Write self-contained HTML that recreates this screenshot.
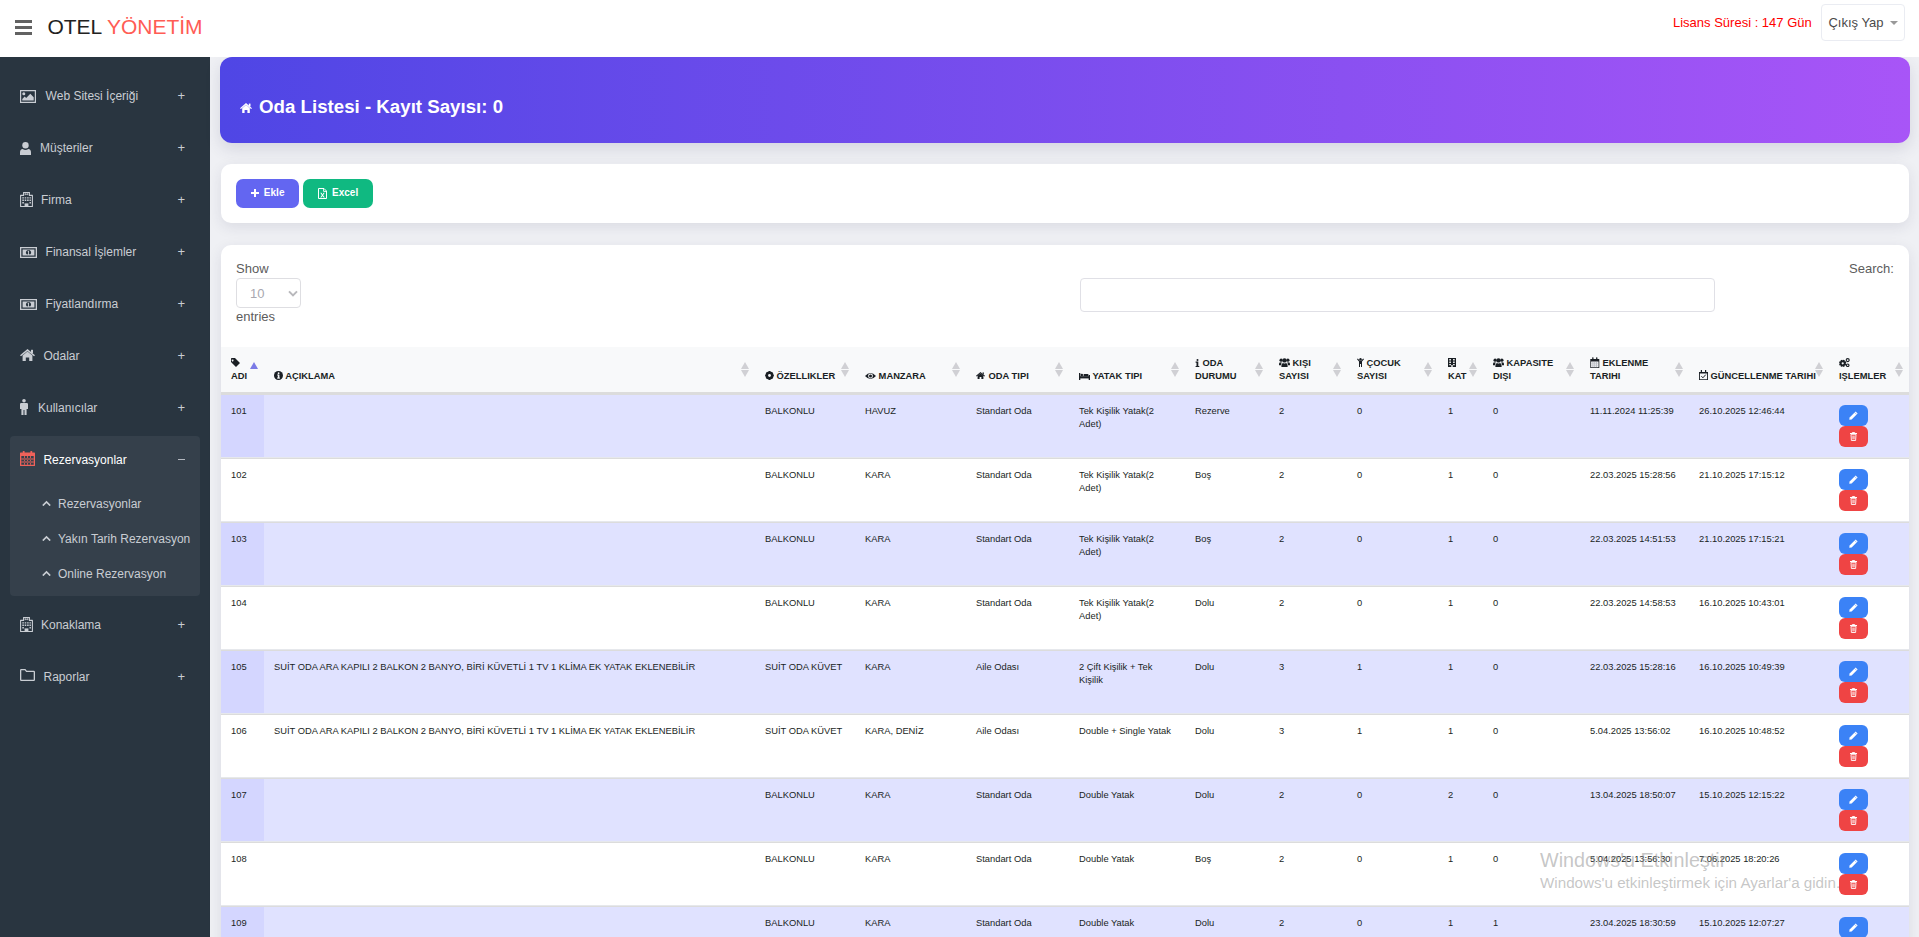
<!DOCTYPE html>
<html lang="tr"><head><meta charset="utf-8"><title>Oda Listesi</title>
<style>
*{box-sizing:border-box}
html,body{margin:0;padding:0}
body{width:1919px;height:937px;overflow:hidden;background:#eff0f4;font-family:"Liberation Sans",sans-serif;position:relative;color:#212529}
.top{position:absolute;left:0;top:0;width:1919px;height:57px;background:#fff;z-index:5}
.hamb{position:absolute;left:15px;top:20px;width:17px;height:14px}
.hamb i{position:absolute;left:0;width:17px;height:2.7px;background:#626262}
.brand{position:absolute;left:47.4px;top:14.6px;font-size:21px;line-height:24px;color:#222;white-space:nowrap}
.brand span{color:#ff5c54}
.lic{position:absolute;left:1673px;top:14px;font-size:13px;line-height:17px;color:#ff0000;white-space:nowrap}
.ddb{position:absolute;left:1821px;top:4px;width:84px;height:37px;border:1px solid #eaecf2;border-radius:4px;background:#fff}
.ddb .t{position:absolute;left:6.4px;top:9.4px;font-size:13px;line-height:17px;color:#4a4a4a;white-space:nowrap}
.ddb .c{position:absolute;left:68.4px;top:15.6px;width:0;height:0;border-left:4px solid transparent;border-right:4px solid transparent;border-top:4.5px solid #999}
.side{position:absolute;left:0;top:57px;width:210px;height:880px;background:#293540}
.mi{position:absolute;left:0;width:210px;height:46px}
.mi .ic{position:absolute;top:0;height:46px;display:flex;align-items:center;color:#c9cdd3}
.mi .ic svg{display:block}
.mi .mt{position:absolute;top:0;line-height:46px;font-size:12px;color:#c9cdd3;white-space:nowrap}
.mi .pl{position:absolute;left:177.6px;top:0;line-height:46px;font-size:13px;color:#c9cdd3}
.mi .mn{position:absolute;left:177.8px;top:22.4px;width:7px;height:1px;background:#b4b8c0}
.act{position:absolute;left:10px;top:379px;width:190px;height:160px;background:#35404b;border-radius:4px}
.si{position:absolute;left:0;width:210px;height:35px}
.si .ch{position:absolute;left:42.1px;top:12.6px;line-height:0}
.si .ch svg{display:block}
.si .st{position:absolute;left:58px;top:0;line-height:35px;font-size:12px;color:#c9cdd3;white-space:nowrap}
.banner{position:absolute;left:220px;top:57px;width:1690px;height:86px;border-radius:12px;background:linear-gradient(90deg,#4f46e5 0%,#a855f7 100%);box-shadow:0 6px 16px rgba(60,60,100,0.14)}
.banner .ti{position:absolute;left:20px;top:0.7px;line-height:98px;font-size:18.7px;font-weight:bold;color:#fff;white-space:nowrap}
.banner .ti svg{vertical-align:1.6px;margin-right:7px}
.card{position:absolute;left:221px;width:1688px;background:#fff;border-radius:10px;box-shadow:0 4px 14px rgba(40,40,80,0.10)}
.c2{top:164px;height:59px}
.c3{top:245px;height:720px;overflow:hidden}
.bt{position:absolute;top:15px;height:29px;border-radius:7px;color:#fff;font-size:10px;font-weight:bold;line-height:27.8px;white-space:nowrap}
.bt svg{vertical-align:0;margin-right:2.3px;position:relative;top:1px}
.b2 svg{top:2.8px}
.b1{left:15px;width:63px;background:#6366f1;padding-left:14.8px}
.b2{left:82px;width:70px;background:#10b981;padding-left:15px}
.lbl{position:absolute;font-size:13px;line-height:15px;color:#5c5c5c;white-space:nowrap}
.sel{position:absolute;left:15px;top:33px;width:65px;height:30px;border:1px solid #dedee2;border-radius:4px}
.sel .v{position:absolute;left:13px;top:6px;font-size:13px;line-height:17px;color:#a8a8b0}
.srch{position:absolute;left:859px;top:33px;width:635px;height:34px;border:1px solid #e0e0e6;border-radius:4px}
table{position:absolute;left:0;top:102px;border-collapse:separate;border-spacing:0;table-layout:fixed;width:1688px;font-size:9.35px}
th{background:#f8f9fa;font-weight:bold;text-align:left;padding:0;line-height:12.9px;position:relative;border-bottom:3px solid #dcdcdc;color:#1a1f24;height:48px}
th .thc{white-space:nowrap;position:absolute;left:10px;bottom:9px}
th .sa{position:absolute;right:5.6px;top:14.8px}
th .thc svg{vertical-align:-1.5px;position:relative;top:1px}
td{vertical-align:top;padding:10px 10px 10px 10px;line-height:13px;height:64px;border-bottom:1px solid #dcdcdc;box-shadow:inset 0 -1px 0 #e6e8ec;color:#1a1f24}
tr.odd td{background:#e0e2ff}
tr.odd td.s1{background:#d4d6ff}
tr.even td{background:#fff}
.btn{width:29px;height:21px;border-radius:6px;display:flex;align-items:center;justify-content:center}
.btn svg{display:block}
.be{background:#3b82f6}
.bd{background:#ef4444}
.wm{position:absolute;left:1540px;top:849px;color:rgba(150,150,150,0.55);white-space:nowrap;pointer-events:none}
.wm .l1{font-size:19.8px;line-height:22px}
.wm .l2{font-size:15.2px;line-height:18px;margin-top:3px}
</style></head><body>
<div class="top">
 <div class="hamb"><i style="top:0"></i><i style="top:6px"></i><i style="top:12px"></i></div>
 <div class="brand">OTEL <span>YÖNETİM</span></div>
 <div class="lic">Lisans Süresi : 147 Gün</div>
 <div class="ddb"><span class="t">Çıkış Yap</span><span class="c"></span></div>
</div>
<div class="side"><div class="mi" style="top:16px"><span class="ic" style="left:20px;top:0px"><svg width="16" height="13" viewBox="0 0 16 13" style="display:inline-block;vertical-align:baseline" fill="currentColor"><path d="M0 0H16V13H0Z M1.2 1.2V11.8H14.8V1.2Z" fill-rule="evenodd"/><circle cx="3.8" cy="3.7" r="1.5"/><path d="M2.3 10.6 V8.9 L4.7 6.5 L6.2 8 L10.3 3.8 L13.7 7.2 V10.6Z"/></svg></span><span class="mt" style="left:45.6px">Web Sitesi İçeriği</span><span class="pl">+</span></div><div class="mi" style="top:68px"><span class="ic" style="left:20px;top:0px"><svg width="11" height="13" viewBox="0 0 11 13" style="display:inline-block;vertical-align:baseline" fill="currentColor"><circle cx="5.5" cy="3.3" r="3.2"/><path d="M0 13 V10.6 Q0 7 2.8 7 Q3.9 7.9 5.5 7.9 Q7.1 7.9 8.2 7 Q11 7 11 10.6 V13Z"/></svg></span><span class="mt" style="left:40px">Müşteriler</span><span class="pl">+</span></div><div class="mi" style="top:120px"><span class="ic" style="left:20px;top:-1px"><svg width="13" height="15" viewBox="0 0 13 15" style="display:inline-block;vertical-align:baseline" fill="currentColor"><path d="M3.6 0.4H9.4V3.4H12.4V14.6H0.6V3.4H3.6Z" stroke="currentColor" stroke-width="1.1" fill="none" stroke-linejoin="round"/><path d="M5.2 1.2V3.2M7.8 1.2V3.2M5.2 2.2H7.8" stroke="currentColor" stroke-width="0.9"/><path d="M2.3 5.2h1.6v1.4H2.3zM4.7 5.2h1.6v1.4H4.7zM7.1 5.2h1.6v1.4H7.1zM9.5 5.2h1.4v1.4H9.5zM2.3 7.6h1.6v1.4H2.3zM4.7 7.6h1.6v1.4H4.7zM7.1 7.6h1.6v1.4H7.1zM9.5 7.6h1.4v1.4H9.5zM2.3 10h1.6v1.4H2.3zM9.5 10h1.4v1.4H9.5z"/><path d="M4.6 14.6V11.4H8.4V14.6Z"/></svg></span><span class="mt" style="left:41px">Firma</span><span class="pl">+</span></div><div class="mi" style="top:172px"><span class="ic" style="left:20px;top:0px"><svg width="17" height="11" viewBox="0 0 17 11" style="display:inline-block;vertical-align:baseline" fill="currentColor"><path d="M0 0H17V11H0Z M1.3 1.3V9.7H15.7V1.3Z" fill-rule="evenodd"/><path d="M2.6 2.6 H14.4 V8.4 H2.6Z M8.5 2.9 A2.6 2.6 0 1 0 8.51 2.9Z" fill-rule="evenodd"/><path d="M7.6 3.8 H9 V7.2 H9.8 V8 H7.3 V7.2 H8.1 V4.6 H7.6Z"/></svg></span><span class="mt" style="left:45.6px">Finansal İşlemler</span><span class="pl">+</span></div><div class="mi" style="top:224px"><span class="ic" style="left:20px;top:0px"><svg width="17" height="11" viewBox="0 0 17 11" style="display:inline-block;vertical-align:baseline" fill="currentColor"><path d="M0 0H17V11H0Z M1.3 1.3V9.7H15.7V1.3Z" fill-rule="evenodd"/><path d="M2.6 2.6 H14.4 V8.4 H2.6Z M8.5 2.9 A2.6 2.6 0 1 0 8.51 2.9Z" fill-rule="evenodd"/><path d="M7.6 3.8 H9 V7.2 H9.8 V8 H7.3 V7.2 H8.1 V4.6 H7.6Z"/></svg></span><span class="mt" style="left:45.6px">Fiyatlandırma</span><span class="pl">+</span></div><div class="mi" style="top:276px"><span class="ic" style="left:20px;top:-1px"><svg width="15" height="12" viewBox="0 0 15 12" style="display:inline-block;vertical-align:baseline" fill="currentColor"><path d="M7.5 0 L15 6.3 L14 7.3 L7.5 1.9 L1 7.3 L0 6.3Z M2.6 6.4 L7.5 2.4 L12.4 6.4 V12 H9.2 V8.4 H5.8 V12 H2.6Z"/><rect x="11" y="0.8" width="2" height="3.2"/></svg></span><span class="mt" style="left:43.5px">Odalar</span><span class="pl">+</span></div><div class="mi" style="top:328px"><span class="ic" style="left:20px;top:-1.5px"><svg width="8" height="16" viewBox="0 0 8 16" style="display:inline-block;vertical-align:baseline" fill="currentColor"><circle cx="4" cy="1.8" r="1.8"/><path d="M1.2 4 H6.8 Q8 4 8 5.2 V10 H6.6 V16 H4.5 V11 H3.5 V16 H1.4 V10 H0 V5.2 Q0 4 1.2 4Z"/></svg></span><span class="mt" style="left:38px">Kullanıcılar</span><span class="pl">+</span></div><div class="act"></div><div class="mi" style="top:380px"><span class="ic" style="left:20px;top:-2px"><svg width="15" height="15" viewBox="0 0 15 15" style="display:inline-block;vertical-align:baseline" fill="#f0625a"><path d="M0 2.2 Q0 1.6 0.6 1.6 H14.4 Q15 1.6 15 2.2 V14.4 Q15 15 14.4 15 H0.6 Q0 15 0 14.4Z M1.3 5 V13.7 H13.7 V5Z" fill-rule="evenodd"/><rect x="2.8" y="0" width="1.8" height="3.6" rx="0.6"/><rect x="10.4" y="0" width="1.8" height="3.6" rx="0.6"/><path d="M1.3 7.6H13.7V8.4H1.3Z M1.3 10.6H13.7V11.4H1.3Z M4.2 5V13.7H5V5Z M7.1 5V13.7H7.9V5Z M10 5V13.7H10.8V5Z"/></svg></span><span class="mt" style="left:43.4px;color:#fff">Rezervasyonlar</span><span class="mn"></span></div><div class="si" style="top:430px"><span class="ch"><svg width="9" height="6" viewBox="0 0 9 6" style="display:inline-block;vertical-align:baseline" fill="currentColor"><path d="M0.8 5.6 L4.5 1.9 L8.2 5.6" stroke="#c9cdd3" stroke-width="1.6" fill="none"/></svg></span><span class="st">Rezervasyonlar</span></div><div class="si" style="top:465px"><span class="ch"><svg width="9" height="6" viewBox="0 0 9 6" style="display:inline-block;vertical-align:baseline" fill="currentColor"><path d="M0.8 5.6 L4.5 1.9 L8.2 5.6" stroke="#c9cdd3" stroke-width="1.6" fill="none"/></svg></span><span class="st">Yakın Tarih Rezervasyon</span></div><div class="si" style="top:500px"><span class="ch"><svg width="9" height="6" viewBox="0 0 9 6" style="display:inline-block;vertical-align:baseline" fill="currentColor"><path d="M0.8 5.6 L4.5 1.9 L8.2 5.6" stroke="#c9cdd3" stroke-width="1.6" fill="none"/></svg></span><span class="st">Online Rezervasyon</span></div><div class="mi" style="top:544.6px"><span class="ic" style="left:20px;top:-0.5px"><svg width="13" height="15" viewBox="0 0 13 15" style="display:inline-block;vertical-align:baseline" fill="currentColor"><path d="M3.6 0.4H9.4V3.4H12.4V14.6H0.6V3.4H3.6Z" stroke="currentColor" stroke-width="1.1" fill="none" stroke-linejoin="round"/><path d="M5.2 1.2V3.2M7.8 1.2V3.2M5.2 2.2H7.8" stroke="currentColor" stroke-width="0.9"/><path d="M2.3 5.2h1.6v1.4H2.3zM4.7 5.2h1.6v1.4H4.7zM7.1 5.2h1.6v1.4H7.1zM9.5 5.2h1.4v1.4H9.5zM2.3 7.6h1.6v1.4H2.3zM4.7 7.6h1.6v1.4H4.7zM7.1 7.6h1.6v1.4H7.1zM9.5 7.6h1.4v1.4H9.5zM2.3 10h1.6v1.4H2.3zM9.5 10h1.4v1.4H9.5z"/><path d="M4.6 14.6V11.4H8.4V14.6Z"/></svg></span><span class="mt" style="left:41px">Konaklama</span><span class="pl">+</span></div><div class="mi" style="top:596.6px"><span class="ic" style="left:20px;top:-1.5px"><svg width="15" height="12" viewBox="0 0 15 12" style="display:inline-block;vertical-align:baseline" fill="currentColor"><path d="M0 1.2 Q0 0 1.2 0 H5.4 L6.8 1.8 H13.8 Q15 1.8 15 3 V10.8 Q15 12 13.8 12 H1.2 Q0 12 0 10.8Z M1.3 1.3 V10.7 H13.7 V3.1 H6.2 L4.8 1.3Z" fill-rule="evenodd"/></svg></span><span class="mt" style="left:43.5px">Raporlar</span><span class="pl">+</span></div></div>
<div class="banner"><div class="ti"><svg width="12" height="10" viewBox="0 0 12 10" style="display:inline-block;vertical-align:baseline" fill="#fff"><path d="M6 0 L12 5.2 L11.1 6.1 L6 1.7 L0.9 6.1 L0 5.2Z M2.2 5.2 L6 2 L9.8 5.2 V10 H7.4 V7 H4.6 V10 H2.2Z"/><rect x="8.8" y="0.6" width="1.7" height="2.8"/></svg>Oda Listesi - Kayıt Sayısı: 0</div></div>
<div class="card c2"><div class="bt b1"><svg width="8" height="8" viewBox="0 0 8 8" style="display:inline-block;vertical-align:baseline" fill="#fff"><path d="M3 0H5V3H8V5H5V8H3V5H0V3H3Z"/></svg> Ekle</div><div class="bt b2"><svg width="9" height="11" viewBox="0 0 9 11" style="display:inline-block;vertical-align:baseline" fill="#fff"><path d="M0.5 0.5H6L8.5 3V10.5H0.5Z" stroke="#fff" stroke-width="1" fill="none"/><path d="M5.6 0.6V3.4H8.4" stroke="#fff" stroke-width="0.9" fill="none"/><path d="M2.3 4.8 H3.5 L4.5 6.5 L5.5 4.8 H6.7 L5.1 7.3 L6.8 9.6 H5.6 L4.5 8 L3.4 9.6 H2.2 L3.9 7.3Z"/></svg> Excel</div></div>
<div class="card c3">
 <div class="lbl" style="left:15px;top:16px">Show</div>
 <div class="sel"><span class="v">10</span><svg style="position:absolute;left:50.5px;top:10.5px" width="10" height="7" viewBox="0 0 10 7"><path d="M1 1.4 L5 5.4 L9 1.4" stroke="#b8b8bc" stroke-width="2" fill="none"/></svg></div>
 <div class="lbl" style="left:15px;top:64px">entries</div>
 <div class="lbl" style="left:1628px;top:16px">Search:</div>
 <div class="srch"></div>
 <table><thead><tr><th style="width:43px"><div class="thc"><svg width="9" height="9" viewBox="0 0 9 9" style="display:inline-block;vertical-align:baseline" fill="currentColor"><path d="M0 0.8 Q0 0 0.8 0 H4 L9 5 L5 9 L0 4 Z M1.6 1.6 a0.9 0.9 0 1 0 0.01 0Z" fill-rule="evenodd"/></svg><br>ADI</div><svg class="sa" width="8" height="15" viewBox="0 0 8 15"><path d="M4 0 L8 7 H0Z" fill="#7b7be6"/></svg></th><th style="width:491px"><div class="thc"><svg width="9" height="9" viewBox="0 0 9 9" style="display:inline-block;vertical-align:baseline" fill="currentColor"><circle cx="4.5" cy="4.5" r="4.5"/><rect x="3.8" y="3.6" width="1.6" height="3.8" fill="#f8f9fa"/><rect x="3" y="6.6" width="3" height="0.9" fill="#f8f9fa"/><rect x="3.1" y="3.6" width="1.5" height="0.8" fill="#f8f9fa"/><circle cx="4.6" cy="2.2" r="0.9" fill="#f8f9fa"/></svg> AÇIKLAMA</div><svg class="sa" width="8" height="15" viewBox="0 0 8 15"><path d="M4 0 L8 7 H0Z" fill="#d0d0d4"/><path d="M0 8 H8 L4 15Z" fill="#d0d0d4"/></svg></th><th style="width:100px"><div class="thc"><svg width="9" height="9" viewBox="0 0 9 9" style="display:inline-block;vertical-align:baseline" fill="currentColor"><path d="M7.64 3.20 L8.88 3.45 L8.88 5.55 L7.64 5.80 L8.34 6.85 L6.85 8.34 L5.80 7.64 L5.55 8.88 L3.45 8.88 L3.20 7.64 L2.15 8.34 L0.66 6.85 L1.36 5.80 L0.12 5.55 L0.12 3.45 L1.36 3.20 L0.66 2.15 L2.15 0.66 L3.20 1.36 L3.45 0.12 L5.55 0.12 L5.80 1.36 L6.85 0.66 L8.34 2.15Z"/><circle cx="4.5" cy="4.5" r="3.5"/><circle cx="4.5" cy="4.5" r="1.4" fill="#f8f9fa"/></svg> ÖZELLIKLER</div><svg class="sa" width="8" height="15" viewBox="0 0 8 15"><path d="M4 0 L8 7 H0Z" fill="#d0d0d4"/><path d="M0 8 H8 L4 15Z" fill="#d0d0d4"/></svg></th><th style="width:111px"><div class="thc"><svg width="11" height="8" viewBox="0 0 11 8" style="display:inline-block;vertical-align:baseline" fill="currentColor"><path d="M0 4 Q5.5 -2 11 4 Q5.5 10 0 4Z"/><circle cx="5.5" cy="4" r="2.4" fill="#f8f9fa"/><circle cx="5.5" cy="4" r="1.5"/></svg> MANZARA</div><svg class="sa" width="8" height="15" viewBox="0 0 8 15"><path d="M4 0 L8 7 H0Z" fill="#d0d0d4"/><path d="M0 8 H8 L4 15Z" fill="#d0d0d4"/></svg></th><th style="width:103px"><div class="thc"><svg width="9" height="7" viewBox="0 0 9 7" style="display:inline-block;vertical-align:baseline;top:0px;margin-right:1px" fill="currentColor"><path d="M4.5 0 L9 3.8 L8.4 4.4 L4.5 1.2 L0.6 4.4 L0 3.8Z M1.6 3.8 L4.5 1.5 L7.4 3.8 V7 H5.4 V5 H3.6 V7 H1.6Z"/><rect x="6.6" y="0.4" width="1.2" height="2"/></svg> ODA TIPI</div><svg class="sa" width="8" height="15" viewBox="0 0 8 15"><path d="M4 0 L8 7 H0Z" fill="#d0d0d4"/><path d="M0 8 H8 L4 15Z" fill="#d0d0d4"/></svg></th><th style="width:116px"><div class="thc"><svg width="11" height="7" viewBox="0 0 11 7" style="display:inline-block;vertical-align:baseline" fill="currentColor"><rect x="0" y="0" width="1.3" height="7"/><rect x="1" y="3.2" width="10" height="2.2"/><rect x="9.7" y="2" width="1.3" height="5"/><circle cx="2.8" cy="2" r="1.3"/><rect x="4.5" y="1" width="5" height="2.2" rx="0.8"/></svg> YATAK TIPI</div><svg class="sa" width="8" height="15" viewBox="0 0 8 15"><path d="M4 0 L8 7 H0Z" fill="#d0d0d4"/><path d="M0 8 H8 L4 15Z" fill="#d0d0d4"/></svg></th><th style="width:84px"><div class="thc"><svg width="5" height="8" viewBox="0 0 5 8" style="display:inline-block;vertical-align:baseline" fill="currentColor"><circle cx="2.5" cy="1" r="1"/><path d="M0.6 2.6H3.3V6.9H4.3V8H0.6V6.9H1.5V3.7H0.6Z"/></svg> ODA<br>DURUMU</div><svg class="sa" width="8" height="15" viewBox="0 0 8 15"><path d="M4 0 L8 7 H0Z" fill="#d0d0d4"/><path d="M0 8 H8 L4 15Z" fill="#d0d0d4"/></svg></th><th style="width:78px"><div class="thc"><svg width="11" height="9" viewBox="0 0 11 9" style="display:inline-block;vertical-align:baseline" fill="currentColor"><circle cx="5.5" cy="2.4" r="2.2"/><circle cx="2.1" cy="2.2" r="1.6"/><circle cx="8.9" cy="2.2" r="1.6"/><path d="M2.4 9 V7.4 Q2.4 4.9 4.2 4.9 Q4.8 5.4 5.5 5.4 Q6.2 5.4 6.8 4.9 Q8.6 4.9 8.6 7.4 V9Z"/><path d="M0 7.2 V6 Q0 4.2 1.3 4.2 Q1.7 4.5 2.2 4.5 Q2.7 4.5 3.1 4.3 Q2 5.2 2 7.2Z"/><path d="M11 7.2 V6 Q11 4.2 9.7 4.2 Q9.3 4.5 8.8 4.5 Q8.3 4.5 7.9 4.3 Q9 5.2 9 7.2Z"/></svg> KIŞI<br>SAYISI</div><svg class="sa" width="8" height="15" viewBox="0 0 8 15"><path d="M4 0 L8 7 H0Z" fill="#d0d0d4"/><path d="M0 8 H8 L4 15Z" fill="#d0d0d4"/></svg></th><th style="width:91px"><div class="thc"><svg width="7" height="9" viewBox="0 0 7 9" style="display:inline-block;vertical-align:baseline" fill="currentColor"><circle cx="3.5" cy="1.2" r="1.2"/><path d="M0 1.2 L0.8 0.6 L2.6 2.6 H4.4 L6.2 0.6 L7 1.2 L5 3.6 V9 H4 V6 H3 V9 H2 V3.6Z"/></svg> ÇOCUK<br>SAYISI</div><svg class="sa" width="8" height="15" viewBox="0 0 8 15"><path d="M4 0 L8 7 H0Z" fill="#d0d0d4"/><path d="M0 8 H8 L4 15Z" fill="#d0d0d4"/></svg></th><th style="width:45px"><div class="thc"><svg width="8" height="9" viewBox="0 0 8 9" style="display:inline-block;vertical-align:baseline" fill="currentColor"><path d="M0 0H8V9H0Z M1.3 1.1V2.5H2.9V1.1Z M5.1 1.1V2.5H6.7V1.1Z M1.3 3.5V4.9H2.9V3.5Z M5.1 3.5V4.9H6.7V3.5Z M1.3 5.9V7.3H2.9V5.9Z M5.1 5.9V7.3H6.7V5.9Z M3.3 7V9H4.7V7Z" fill-rule="evenodd"/></svg><br>KAT</div><svg class="sa" width="8" height="15" viewBox="0 0 8 15"><path d="M4 0 L8 7 H0Z" fill="#d0d0d4"/><path d="M0 8 H8 L4 15Z" fill="#d0d0d4"/></svg></th><th style="width:97px"><div class="thc"><svg width="11" height="9" viewBox="0 0 11 9" style="display:inline-block;vertical-align:baseline" fill="currentColor"><circle cx="5.5" cy="2.4" r="2.2"/><circle cx="2.1" cy="2.2" r="1.6"/><circle cx="8.9" cy="2.2" r="1.6"/><path d="M2.4 9 V7.4 Q2.4 4.9 4.2 4.9 Q4.8 5.4 5.5 5.4 Q6.2 5.4 6.8 4.9 Q8.6 4.9 8.6 7.4 V9Z"/><path d="M0 7.2 V6 Q0 4.2 1.3 4.2 Q1.7 4.5 2.2 4.5 Q2.7 4.5 3.1 4.3 Q2 5.2 2 7.2Z"/><path d="M11 7.2 V6 Q11 4.2 9.7 4.2 Q9.3 4.5 8.8 4.5 Q8.3 4.5 7.9 4.3 Q9 5.2 9 7.2Z"/></svg> KAPASITE<br>DIŞI</div><svg class="sa" width="8" height="15" viewBox="0 0 8 15"><path d="M4 0 L8 7 H0Z" fill="#d0d0d4"/><path d="M0 8 H8 L4 15Z" fill="#d0d0d4"/></svg></th><th style="width:109px"><div class="thc"><svg width="10" height="11" viewBox="0 0 10 11" style="display:inline-block;vertical-align:baseline;top:1.6px" fill="currentColor"><path d="M0.3 2H9.3V11H0.3Z M1.1 4.4V10.2H8.5V4.4Z" fill-rule="evenodd"/><rect x="2.2" y="0.2" width="1.3" height="2.8" rx="0.5"/><rect x="6.1" y="0.2" width="1.3" height="2.8" rx="0.5"/><path d="M2.95 4.4V10.2M4.8 4.4V10.2M6.65 4.4V10.2" stroke="#8a8f98" stroke-width="0.6"/><path d="M1.1 6.4H8.5M1.1 8.3H8.5" stroke="#b8bcc4" stroke-width="0.4"/></svg> EKLENME<br>TARIHI</div><svg class="sa" width="8" height="15" viewBox="0 0 8 15"><path d="M4 0 L8 7 H0Z" fill="#d0d0d4"/><path d="M0 8 H8 L4 15Z" fill="#d0d0d4"/></svg></th><th style="width:140px"><div class="thc"><svg width="9" height="10" viewBox="0 0 9 10" style="display:inline-block;vertical-align:baseline" fill="currentColor"><path d="M0 2H9V10H0Z M0.9 3.6V9.2H8.1V3.6Z" fill-rule="evenodd"/><rect x="1.8" y="0" width="1.2" height="2.6"/><rect x="6" y="0" width="1.2" height="2.6"/><path d="M2.4 6.2 L3.9 7.8 L6.8 4.6" stroke="currentColor" stroke-width="1" fill="none"/></svg> GÜNCELLENME TARIHI</div><svg class="sa" width="8" height="15" viewBox="0 0 8 15"><path d="M4 0 L8 7 H0Z" fill="#d0d0d4"/><path d="M0 8 H8 L4 15Z" fill="#d0d0d4"/></svg></th><th style="width:80px"><div class="thc"><svg width="11" height="9" viewBox="0 0 11 9" style="display:inline-block;vertical-align:baseline" fill="currentColor"><path d="M6.50 5.30 L7.34 5.95 L6.74 7.42 L5.68 7.28 L5.82 8.34 L4.35 8.94 L3.70 8.10 L3.05 8.94 L1.58 8.34 L1.72 7.28 L0.66 7.42 L0.06 5.95 L0.90 5.30 L0.06 4.65 L0.66 3.18 L1.72 3.32 L1.58 2.26 L3.05 1.66 L3.70 2.50 L4.35 1.66 L5.82 2.26 L5.68 3.32 L6.74 3.18 L7.34 4.65Z"/><circle cx="3.7" cy="5.3" r="1.1" fill="#f8f9fa"/><circle cx="8.7" cy="2.1" r="1.5" fill="none" stroke="currentColor" stroke-width="1.1"/><circle cx="8.7" cy="7.3" r="1.3" fill="none" stroke="currentColor" stroke-width="1.1"/></svg><br>IŞLEMLER</div><svg class="sa" width="8" height="15" viewBox="0 0 8 15"><path d="M4 0 L8 7 H0Z" fill="#d0d0d4"/><path d="M0 8 H8 L4 15Z" fill="#d0d0d4"/></svg></th></tr></thead><tbody><tr class="odd"><td class="s1">101</td><td></td><td>BALKONLU</td><td>HAVUZ</td><td>Standart Oda</td><td>Tek Kişilik Yatak(2 Adet)</td><td>Rezerve</td><td>2</td><td>0</td><td>1</td><td>0</td><td>11.11.2024 11:25:39</td><td>26.10.2025 12:46:44</td><td><div class="btn be"><svg width="9" height="9" viewBox="0 0 9 9" style="display:inline-block;vertical-align:baseline" fill="#fff"><path d="M6.6 0.4 L8.6 2.4 L2.6 8.4 L0.3 8.7 L0.6 6.4Z"/><path d="M5.6 1.4 L7.6 3.4" stroke="#3b82f6" stroke-width="0.5"/></svg></div><div class="btn bd"><svg width="7" height="9" viewBox="0 0 7 9" style="display:inline-block;vertical-align:baseline" fill="none"><path d="M0 1.5H7" stroke="#fff" stroke-width="1"/><path d="M2.3 1.2V0.5H4.7V1.2" stroke="#fff" stroke-width="0.9" fill="none"/><path d="M1 2.3H6L5.6 8.5H1.4Z" stroke="#fff" stroke-width="0.9" fill="none"/><path d="M2.6 3.6V7.4M3.5 3.6V7.4M4.4 3.6V7.4" stroke="#fff" stroke-width="0.55"/></svg></div></td></tr><tr class="even"><td class="s1">102</td><td></td><td>BALKONLU</td><td>KARA</td><td>Standart Oda</td><td>Tek Kişilik Yatak(2 Adet)</td><td>Boş</td><td>2</td><td>0</td><td>1</td><td>0</td><td>22.03.2025 15:28:56</td><td>21.10.2025 17:15:12</td><td><div class="btn be"><svg width="9" height="9" viewBox="0 0 9 9" style="display:inline-block;vertical-align:baseline" fill="#fff"><path d="M6.6 0.4 L8.6 2.4 L2.6 8.4 L0.3 8.7 L0.6 6.4Z"/><path d="M5.6 1.4 L7.6 3.4" stroke="#3b82f6" stroke-width="0.5"/></svg></div><div class="btn bd"><svg width="7" height="9" viewBox="0 0 7 9" style="display:inline-block;vertical-align:baseline" fill="none"><path d="M0 1.5H7" stroke="#fff" stroke-width="1"/><path d="M2.3 1.2V0.5H4.7V1.2" stroke="#fff" stroke-width="0.9" fill="none"/><path d="M1 2.3H6L5.6 8.5H1.4Z" stroke="#fff" stroke-width="0.9" fill="none"/><path d="M2.6 3.6V7.4M3.5 3.6V7.4M4.4 3.6V7.4" stroke="#fff" stroke-width="0.55"/></svg></div></td></tr><tr class="odd"><td class="s1">103</td><td></td><td>BALKONLU</td><td>KARA</td><td>Standart Oda</td><td>Tek Kişilik Yatak(2 Adet)</td><td>Boş</td><td>2</td><td>0</td><td>1</td><td>0</td><td>22.03.2025 14:51:53</td><td>21.10.2025 17:15:21</td><td><div class="btn be"><svg width="9" height="9" viewBox="0 0 9 9" style="display:inline-block;vertical-align:baseline" fill="#fff"><path d="M6.6 0.4 L8.6 2.4 L2.6 8.4 L0.3 8.7 L0.6 6.4Z"/><path d="M5.6 1.4 L7.6 3.4" stroke="#3b82f6" stroke-width="0.5"/></svg></div><div class="btn bd"><svg width="7" height="9" viewBox="0 0 7 9" style="display:inline-block;vertical-align:baseline" fill="none"><path d="M0 1.5H7" stroke="#fff" stroke-width="1"/><path d="M2.3 1.2V0.5H4.7V1.2" stroke="#fff" stroke-width="0.9" fill="none"/><path d="M1 2.3H6L5.6 8.5H1.4Z" stroke="#fff" stroke-width="0.9" fill="none"/><path d="M2.6 3.6V7.4M3.5 3.6V7.4M4.4 3.6V7.4" stroke="#fff" stroke-width="0.55"/></svg></div></td></tr><tr class="even"><td class="s1">104</td><td></td><td>BALKONLU</td><td>KARA</td><td>Standart Oda</td><td>Tek Kişilik Yatak(2 Adet)</td><td>Dolu</td><td>2</td><td>0</td><td>1</td><td>0</td><td>22.03.2025 14:58:53</td><td>16.10.2025 10:43:01</td><td><div class="btn be"><svg width="9" height="9" viewBox="0 0 9 9" style="display:inline-block;vertical-align:baseline" fill="#fff"><path d="M6.6 0.4 L8.6 2.4 L2.6 8.4 L0.3 8.7 L0.6 6.4Z"/><path d="M5.6 1.4 L7.6 3.4" stroke="#3b82f6" stroke-width="0.5"/></svg></div><div class="btn bd"><svg width="7" height="9" viewBox="0 0 7 9" style="display:inline-block;vertical-align:baseline" fill="none"><path d="M0 1.5H7" stroke="#fff" stroke-width="1"/><path d="M2.3 1.2V0.5H4.7V1.2" stroke="#fff" stroke-width="0.9" fill="none"/><path d="M1 2.3H6L5.6 8.5H1.4Z" stroke="#fff" stroke-width="0.9" fill="none"/><path d="M2.6 3.6V7.4M3.5 3.6V7.4M4.4 3.6V7.4" stroke="#fff" stroke-width="0.55"/></svg></div></td></tr><tr class="odd"><td class="s1">105</td><td>SUİT ODA ARA KAPILI 2 BALKON 2 BANYO, BİRİ KÜVETLİ 1 TV 1 KLİMA EK YATAK EKLENEBİLİR</td><td>SUİT ODA KÜVET</td><td>KARA</td><td>Aile Odası</td><td>2 Çift Kişilik + Tek Kişilik</td><td>Dolu</td><td>3</td><td>1</td><td>1</td><td>0</td><td>22.03.2025 15:28:16</td><td>16.10.2025 10:49:39</td><td><div class="btn be"><svg width="9" height="9" viewBox="0 0 9 9" style="display:inline-block;vertical-align:baseline" fill="#fff"><path d="M6.6 0.4 L8.6 2.4 L2.6 8.4 L0.3 8.7 L0.6 6.4Z"/><path d="M5.6 1.4 L7.6 3.4" stroke="#3b82f6" stroke-width="0.5"/></svg></div><div class="btn bd"><svg width="7" height="9" viewBox="0 0 7 9" style="display:inline-block;vertical-align:baseline" fill="none"><path d="M0 1.5H7" stroke="#fff" stroke-width="1"/><path d="M2.3 1.2V0.5H4.7V1.2" stroke="#fff" stroke-width="0.9" fill="none"/><path d="M1 2.3H6L5.6 8.5H1.4Z" stroke="#fff" stroke-width="0.9" fill="none"/><path d="M2.6 3.6V7.4M3.5 3.6V7.4M4.4 3.6V7.4" stroke="#fff" stroke-width="0.55"/></svg></div></td></tr><tr class="even"><td class="s1">106</td><td>SUİT ODA ARA KAPILI 2 BALKON 2 BANYO, BİRİ KÜVETLİ 1 TV 1 KLİMA EK YATAK EKLENEBİLİR</td><td>SUİT ODA KÜVET</td><td>KARA, DENİZ</td><td>Aile Odası</td><td>Double + Single Yatak</td><td>Dolu</td><td>3</td><td>1</td><td>1</td><td>0</td><td>5.04.2025 13:56:02</td><td>16.10.2025 10:48:52</td><td><div class="btn be"><svg width="9" height="9" viewBox="0 0 9 9" style="display:inline-block;vertical-align:baseline" fill="#fff"><path d="M6.6 0.4 L8.6 2.4 L2.6 8.4 L0.3 8.7 L0.6 6.4Z"/><path d="M5.6 1.4 L7.6 3.4" stroke="#3b82f6" stroke-width="0.5"/></svg></div><div class="btn bd"><svg width="7" height="9" viewBox="0 0 7 9" style="display:inline-block;vertical-align:baseline" fill="none"><path d="M0 1.5H7" stroke="#fff" stroke-width="1"/><path d="M2.3 1.2V0.5H4.7V1.2" stroke="#fff" stroke-width="0.9" fill="none"/><path d="M1 2.3H6L5.6 8.5H1.4Z" stroke="#fff" stroke-width="0.9" fill="none"/><path d="M2.6 3.6V7.4M3.5 3.6V7.4M4.4 3.6V7.4" stroke="#fff" stroke-width="0.55"/></svg></div></td></tr><tr class="odd"><td class="s1">107</td><td></td><td>BALKONLU</td><td>KARA</td><td>Standart Oda</td><td>Double Yatak</td><td>Dolu</td><td>2</td><td>0</td><td>2</td><td>0</td><td>13.04.2025 18:50:07</td><td>15.10.2025 12:15:22</td><td><div class="btn be"><svg width="9" height="9" viewBox="0 0 9 9" style="display:inline-block;vertical-align:baseline" fill="#fff"><path d="M6.6 0.4 L8.6 2.4 L2.6 8.4 L0.3 8.7 L0.6 6.4Z"/><path d="M5.6 1.4 L7.6 3.4" stroke="#3b82f6" stroke-width="0.5"/></svg></div><div class="btn bd"><svg width="7" height="9" viewBox="0 0 7 9" style="display:inline-block;vertical-align:baseline" fill="none"><path d="M0 1.5H7" stroke="#fff" stroke-width="1"/><path d="M2.3 1.2V0.5H4.7V1.2" stroke="#fff" stroke-width="0.9" fill="none"/><path d="M1 2.3H6L5.6 8.5H1.4Z" stroke="#fff" stroke-width="0.9" fill="none"/><path d="M2.6 3.6V7.4M3.5 3.6V7.4M4.4 3.6V7.4" stroke="#fff" stroke-width="0.55"/></svg></div></td></tr><tr class="even"><td class="s1">108</td><td></td><td>BALKONLU</td><td>KARA</td><td>Standart Oda</td><td>Double Yatak</td><td>Boş</td><td>2</td><td>0</td><td>1</td><td>0</td><td>5.04.2025 13:56:30</td><td>7.06.2025 18:20:26</td><td><div class="btn be"><svg width="9" height="9" viewBox="0 0 9 9" style="display:inline-block;vertical-align:baseline" fill="#fff"><path d="M6.6 0.4 L8.6 2.4 L2.6 8.4 L0.3 8.7 L0.6 6.4Z"/><path d="M5.6 1.4 L7.6 3.4" stroke="#3b82f6" stroke-width="0.5"/></svg></div><div class="btn bd"><svg width="7" height="9" viewBox="0 0 7 9" style="display:inline-block;vertical-align:baseline" fill="none"><path d="M0 1.5H7" stroke="#fff" stroke-width="1"/><path d="M2.3 1.2V0.5H4.7V1.2" stroke="#fff" stroke-width="0.9" fill="none"/><path d="M1 2.3H6L5.6 8.5H1.4Z" stroke="#fff" stroke-width="0.9" fill="none"/><path d="M2.6 3.6V7.4M3.5 3.6V7.4M4.4 3.6V7.4" stroke="#fff" stroke-width="0.55"/></svg></div></td></tr><tr class="odd"><td class="s1">109</td><td></td><td>BALKONLU</td><td>KARA</td><td>Standart Oda</td><td>Double Yatak</td><td>Dolu</td><td>2</td><td>0</td><td>1</td><td>1</td><td>23.04.2025 18:30:59</td><td>15.10.2025 12:07:27</td><td><div class="btn be"><svg width="9" height="9" viewBox="0 0 9 9" style="display:inline-block;vertical-align:baseline" fill="#fff"><path d="M6.6 0.4 L8.6 2.4 L2.6 8.4 L0.3 8.7 L0.6 6.4Z"/><path d="M5.6 1.4 L7.6 3.4" stroke="#3b82f6" stroke-width="0.5"/></svg></div><div class="btn bd"><svg width="7" height="9" viewBox="0 0 7 9" style="display:inline-block;vertical-align:baseline" fill="none"><path d="M0 1.5H7" stroke="#fff" stroke-width="1"/><path d="M2.3 1.2V0.5H4.7V1.2" stroke="#fff" stroke-width="0.9" fill="none"/><path d="M1 2.3H6L5.6 8.5H1.4Z" stroke="#fff" stroke-width="0.9" fill="none"/><path d="M2.6 3.6V7.4M3.5 3.6V7.4M4.4 3.6V7.4" stroke="#fff" stroke-width="0.55"/></svg></div></td></tr></tbody></table>
</div>
<div class="wm"><div class="l1">Windows'u Etkinleştir</div><div class="l2">Windows'u etkinleştirmek için Ayarlar'a gidin.</div></div>
</body></html>
